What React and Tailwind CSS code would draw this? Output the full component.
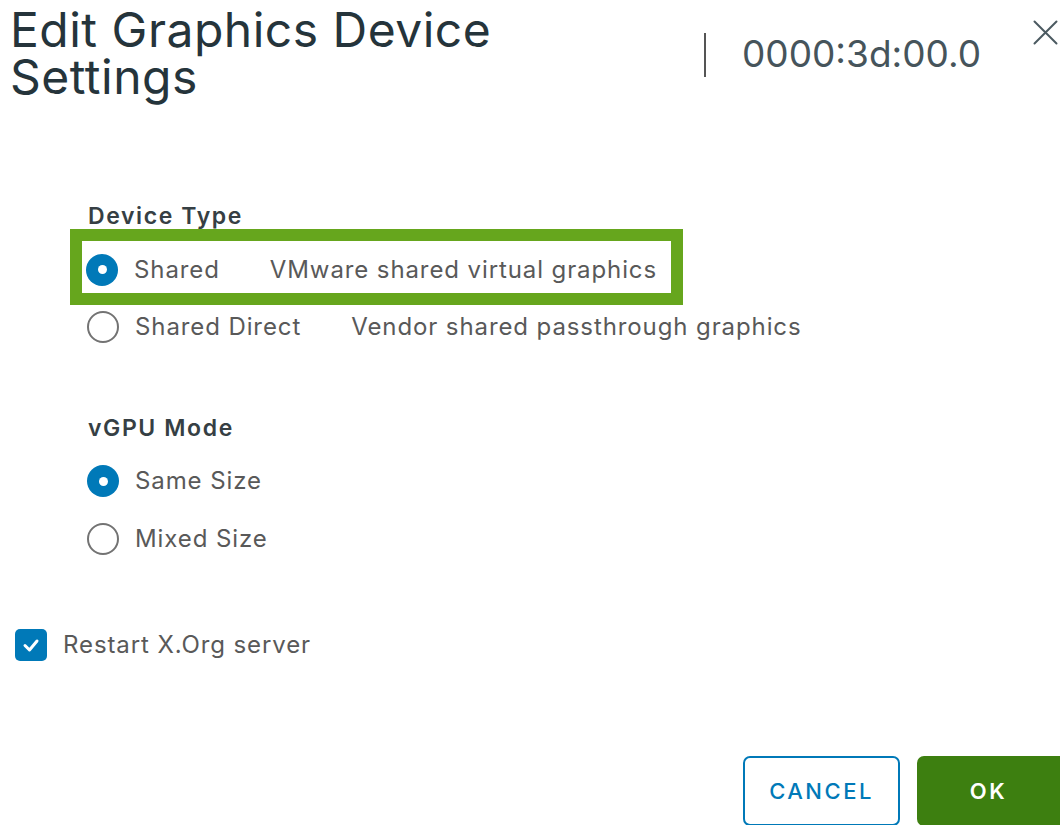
import React from 'react';

const font = { fontFamily: 'Inter, "Noto Sans", sans-serif' };

const Radio = ({ checked }) =>
  checked ? (
    <span className="flex h-[32px] w-[32px] shrink-0 items-center justify-center rounded-full bg-[#0079b8]">
      <span className="h-[9px] w-[9px] rounded-full bg-white" />
    </span>
  ) : (
    <span className="h-[32px] w-[32px] shrink-0 rounded-full border-2 border-[#737373] bg-white" />
  );

const RadioRow = ({ checked, label, hint, height }) => (
  <div className={`flex ${height} items-center`}>
    <Radio checked={checked} />
    <span className="ml-[16px] text-[24px] leading-[30px] tracking-[0.9px] text-[#595959]">{label}</span>
    {hint && <span className="ml-[50px] text-[24px] leading-[30px] tracking-[0.9px] text-[#595959]">{hint}</span>}
  </div>
);

const GroupLabel = ({ children, className = '' }) => (
  <div className={`pl-[18px] text-[23px] leading-[24px] font-semibold tracking-[1.6px] text-[#363f44] ${className}`}>
    {children}
  </div>
);

export default function App() {
  const [deviceType] = React.useState('shared');
  const [mode] = React.useState('same');

  return (
    <div className="h-[825px] w-[1060px] overflow-hidden bg-white" style={font}>
      {/* header */}
      <div className="flex items-start pl-[10px] pt-[6px]">
        <h1 className="w-[694px] shrink-0 text-[48px] leading-[47px] font-normal tracking-[0.5px] text-[#25343b]">
          Edit Graphics Device
          <br />
          Settings
        </h1>
        <div className="mt-[27px] h-[44px] w-[2px] bg-[#555]" />
        <div className="ml-[36px] mt-[26px] text-[37px] leading-[44px] text-[#46545b]">0000:3d:00.0</div>
        <button className="ml-auto mr-[2px] mt-[14px] text-[#4b5a61]">
          <svg width="25" height="25" viewBox="0 0 25 25" fill="none" stroke="currentColor" strokeWidth="2" strokeLinecap="round">
            <path d="M1.5 1.5 L23.5 23.5 M23.5 1.5 L1.5 23.5" />
          </svg>
        </button>
      </div>

      <div className="pl-[70px]">
        {/* device type */}
        <GroupLabel className="mt-[104px]">Device Type</GroupLabel>
        <div className="mt-[1px] w-[613px] border-[12px] border-[#66a61d] pl-[4px] pt-[5px]">
          <RadioRow checked={deviceType === 'shared'} label="Shared" hint="VMware shared virtual graphics" height="h-[47px]" />
        </div>
        <div className="pl-[17px]">
          <RadioRow checked={deviceType === 'direct'} label="Shared Direct" hint="Vendor shared passthrough graphics" height="h-[44px]" />
        </div>

        {/* vgpu mode */}
        <GroupLabel className="mt-[67px]">vGPU Mode</GroupLabel>
        <div className="mt-[12px] pl-[17px]">
          <RadioRow checked={mode === 'same'} label="Same Size" height="h-[58px]" />
          <RadioRow checked={mode === 'mixed'} label="Mixed Size" height="h-[58px]" />
        </div>
      </div>

      {/* restart checkbox */}
      <div className="mt-[61px] flex h-[32px] items-center pl-[15px]">
        <span className="flex h-[32px] w-[32px] items-center justify-center rounded-[5px] bg-[#0079b8]">
          <svg width="20" height="20" viewBox="0 0 20 20" fill="none" stroke="white" strokeWidth="3" strokeLinecap="round" strokeLinejoin="round">
            <path d="M4 10.5 L8.5 15 L16 6" />
          </svg>
        </span>
        <span className="ml-[16px] text-[24px] leading-[30px] tracking-[0.9px] text-[#595959]">Restart X.Org server</span>
      </div>

      {/* footer buttons */}
      <div className="mt-[95px] flex justify-end gap-[17px]">
        <button className="h-[70px] w-[157px] rounded-[7px] border-2 border-[#0079b8] bg-white text-[22px] font-medium tracking-[2.5px] text-[#0079b8]">
          CANCEL
        </button>
        <button className="h-[70px] w-[143px] rounded-l-[7px] bg-[#3d7f10] text-[22px] font-semibold tracking-[2.5px] text-white">
          OK
        </button>
      </div>
    </div>
  );
}
